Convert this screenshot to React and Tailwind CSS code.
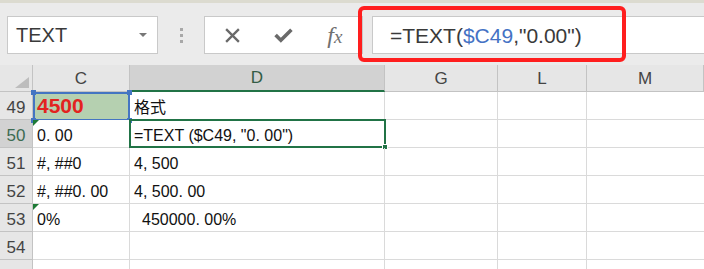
import React from 'react';

const cols = [
  { key: 'C', w: 'w-[97px]' },
  { key: 'D', w: 'w-[255px]' },
  { key: 'G', w: 'w-[113px]' },
  { key: 'L', w: 'w-[89px]' },
  { key: 'M', w: 'flex-1' },
];

const rows = [
  { n: 49, c: '4500', d: '格式' },
  { n: 50, c: '0. 00', d: '=TEXT ($C49, "0. 00")' },
  { n: 51, c: '#, ##0', d: '4, 500' },
  { n: 52, c: '#, ##0. 00', d: '4, 500. 00' },
  { n: 53, c: '0%', d: '450000. 00%' },
  { n: 54, c: '', d: '' },
  { n: null, c: '', d: '' },
];

const GreenTri = () => (
  <span className="absolute left-0 top-0 w-0 h-0 border-t-[6px] border-r-[6px] border-t-[#1d7a36] border-r-transparent" />
);

function Toolbar() {
  return (
    <div className="relative h-[65px] bg-[#ebebeb] border-t-[3px] border-[#dcdbd0] pt-[13px] pl-[7px] flex items-start">
      {/* name box */}
      <div className="w-[151px] h-[38px] bg-white border border-[#c9c9c9] flex items-center pl-[8px] pr-[10px]">
        <span className="flex-1 text-[20px] text-[#3a3a3a] leading-none">TEXT</span>
        <span className="w-0 h-0 border-l-[4px] border-r-[4px] border-t-[4px] border-l-transparent border-r-transparent border-t-[#777]" />
      </div>
      <div className="w-[46px] h-[38px] flex flex-col items-center justify-center gap-[3px]">
        <span className="w-[3px] h-[3px] bg-[#a8a8a8]" />
        <span className="w-[3px] h-[3px] bg-[#a8a8a8]" />
        <span className="w-[3px] h-[3px] bg-[#a8a8a8]" />
      </div>
      {/* buttons */}
      <div className="w-[159px] h-[38px] bg-white border border-[#c9c9c9] flex items-center">
        <div className="w-[56px] flex justify-center">
          <svg width="17" height="17" viewBox="0 0 16 16">
            <path d="M2 2L14 14M14 2L2 14" stroke="#6a6a6a" strokeWidth="2.2" fill="none" />
          </svg>
        </div>
        <div className="w-[50px] flex justify-center">
          <svg width="19" height="15" viewBox="0 0 18 14">
            <path d="M1.5 6.5L6.5 11.5L16.5 1.5" stroke="#6a6a6a" strokeWidth="3.4" fill="none" />
          </svg>
        </div>
        <div className="w-[56px] flex justify-center">
          <span className="text-[24px] italic text-[#707070] font-['Liberation_Serif',serif] leading-none">
            f<span className="text-[19px]">x</span>
          </span>
        </div>
      </div>
      <div className="w-[9px]" />
      {/* formula box */}
      <div className="flex-1 h-[38px] bg-white border border-[#c9c9c9] border-r-0 flex items-center pl-[17px]">
        <span className="text-[21px] text-[#3a3a3a] leading-none">
          =TEXT(<span className="text-[#4472c4]">$C49</span>,"0.00")
        </span>
      </div>
      {/* red annotation */}
      <div className="absolute left-[358px] top-[3px] w-[268px] h-[56px] border-[4px] border-[#ff1e1e] rounded-[6px]" />
    </div>
  );
}

function HeaderRow() {
  return (
    <div className="flex h-[27px] bg-[#e6e6e6]">
      <div className="relative w-[33px] border-r border-b border-[#c3c3c3]">
        <span className="absolute right-[3px] bottom-[3px] w-0 h-0 border-b-[11px] border-l-[14px] border-b-[#bdbdbd] border-l-transparent" />
      </div>
      {cols.map((c) => (
        <div
          key={c.key}
          className={`${c.w} flex items-end justify-center pb-[2px] text-[17px] leading-[20px] border-r border-[#c3c3c3] ${
            c.key === 'D'
              ? 'bg-[#d2d2d2] border-b-[2px] border-b-[#217346] text-[#335c45]'
              : 'border-b text-[#444]'
          }`}
        >
          {c.key}
        </div>
      ))}
    </div>
  );
}

function SheetRow({ r }) {
  const sel = r.n === 50;
  return (
    <div className="flex h-[28px]">
      <div
        className={`w-[33px] flex items-end justify-center pb-[1px] text-[17px] leading-[20px] border-r border-b border-[#c3c3c3] ${
          sel ? 'bg-[#d2d2d2] text-[#3d6b52]' : 'bg-[#e6e6e6] text-[#444]'
        }`}
      >
        {r.n}
      </div>
      <div
        className={`relative w-[97px] flex items-end pl-[4px] pb-[1px] border-r border-b border-[#dadada] ${
          r.n === 49 ? 'bg-[#b5d0b0]' : 'bg-white'
        }`}
      >
        {r.n === 49 ? (
          <>
            <span className="text-[21px] leading-[24px] font-bold text-[#e3231f]">{r.c}</span>
            <span className="absolute left-[0px] top-[0px] w-[97px] h-[29px] border-2 border-[#4475c2]" />
            <span className="absolute left-[-2px] top-[-2px] w-[5px] h-[5px] bg-[#4475c2]" />
            <span className="absolute right-[-3px] top-[-2px] w-[5px] h-[5px] bg-[#4475c2]" />
            <span className="absolute left-[-2px] bottom-[-4px] w-[5px] h-[5px] bg-[#4475c2]" />
            <span className="absolute right-[-3px] bottom-[-4px] w-[5px] h-[5px] bg-[#4475c2]" />
          </>
        ) : (
          <span className="text-[16px] leading-[20px] text-[#111]">{r.c}</span>
        )}
        {(r.n === 50 || r.n === 53) && <GreenTri />}
      </div>
      <div className={`relative w-[255px] flex items-end pb-[1px] border-r border-b border-[#dadada] ${r.n === 53 ? 'pl-[12px]' : 'pl-[4px]'}`}>
        <span className="text-[16px] leading-[20px] text-[#111] font-['Liberation_Sans','Noto_Sans_CJK_SC',sans-serif]">
          {r.d}
        </span>
        {sel && (
          <>
            <span className="absolute left-[-1px] top-[-1px] w-[257px] h-[29px] border-2 border-[#217346]" />
            <span className="absolute right-[-4px] bottom-[-3px] w-[6px] h-[6px] bg-[#217346] border border-white" />
          </>
        )}
      </div>
      <div className="w-[113px] border-r border-b border-[#dadada]" />
      <div className="w-[89px] border-r border-b border-[#dadada]" />
      <div className="flex-1 border-b border-[#dadada]" />
    </div>
  );
}

export default function App() {
  return (
    <div className="w-[704px] h-[269px] overflow-hidden bg-white font-['Liberation_Sans',sans-serif]">
      <Toolbar />
      <HeaderRow />
      {rows.map((r, i) => (
        <SheetRow key={i} r={r} />
      ))}
    </div>
  );
}
